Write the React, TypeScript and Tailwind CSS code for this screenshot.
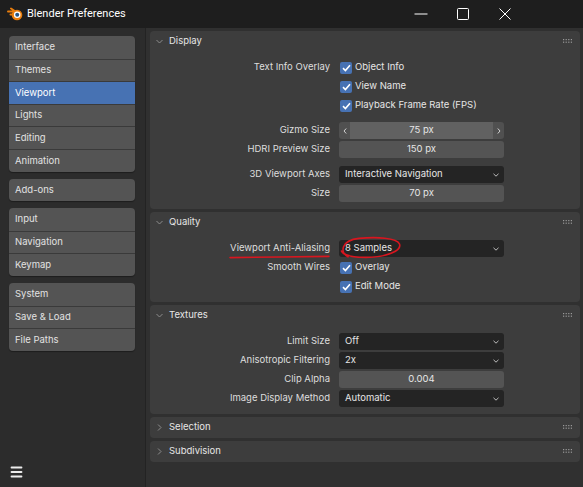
import React from "react";

const ui = "font-['Inter','DejaVu_Sans',sans-serif] text-[9.5px]";

function BlenderLogo() {
  return (
    <svg width="16" height="14" viewBox="0 0 16 14">
      <path d="M1 4.5 L7 4.5 M3.5 7.5 L7.5 7.5 M4 1.5 L8.5 4.5" stroke="#e87d0d" strokeWidth="2" strokeLinecap="round" />
      <circle cx="10" cy="8" r="5.3" fill="#e87d0d" />
      <circle cx="10.2" cy="7.8" r="3.3" fill="#ffffff" />
      <circle cx="10.2" cy="7.8" r="2" fill="#265787" />
    </svg>
  );
}

function TitleBar() {
  return (
    <div className="h-[28px] flex items-center bg-[#1e1e1e] shrink-0">
      <div className="ml-[7px] flex items-center">
        <BlenderLogo />
      </div>
      <span className="ml-[4px] text-white text-[11px] font-['Roboto',sans-serif]">Blender Preferences</span>
      <div className="ml-auto mr-[57px] flex h-full">
        <div className="w-[42px] flex items-center justify-center">
          <svg width="14" height="2" viewBox="0 0 14 2">
            <path d="M0.5 1 H13.5" stroke="#ffffff" strokeWidth="1" />
          </svg>
        </div>
        <div className="w-[42px] flex items-center justify-center">
          <svg width="12" height="12" viewBox="0 0 12 12">
            <rect x="0.5" y="0.5" width="11" height="11" rx="1" fill="none" stroke="#ffffff" strokeWidth="1" />
          </svg>
        </div>
        <div className="w-[42px] flex items-center justify-center">
          <svg width="12" height="12" viewBox="0 0 12 12">
            <path d="M0.5 0.5 L11.5 11.5 M11.5 0.5 L0.5 11.5" stroke="#ffffff" strokeWidth="1" />
          </svg>
        </div>
      </div>
    </div>
  );
}

type NavItem = { name: string; active?: boolean };

const groups: NavItem[][] = [
  [
    { name: "Interface" },
    { name: "Themes" },
    { name: "Viewport", active: true },
    { name: "Lights" },
    { name: "Editing" },
    { name: "Animation" },
  ],
  [{ name: "Add-ons" }],
  [{ name: "Input" }, { name: "Navigation" }, { name: "Keymap" }],
  [{ name: "System" }, { name: "Save & Load" }, { name: "File Paths" }],
];

function Sidebar() {
  return (
    <div className="w-[146px] shrink-0 bg-[#2c2c2c] border-r border-[#232323] flex flex-col pt-[8px] pl-[9px] pr-[10px] pb-[9px]">
      <div className="flex flex-col gap-[7px]">
        {groups.map((g, gi) => (
          <div key={gi} className="rounded-[4px] overflow-hidden bg-[#545454] shadow-[0_1px_1px_rgba(0,0,0,0.35)]">
            {g.map((item, i) => (
              <div
                key={item.name}
                className={
                  "h-[22.6px] flex items-center pl-[6px] " +
                  (i > 0 ? "border-t border-[#3a3a3a] " : "") +
                  (item.active ? "bg-[#4772b3] text-white" : "text-[#e2e2e2]")
                }
              >
                {item.name}
              </div>
            ))}
          </div>
        ))}
      </div>
      <div className="mt-auto ml-[1px]">
        <svg width="13" height="12" viewBox="0 0 13 12">
          <path d="M1.5 1.5 H11.5 M1.5 6 H11.5 M1.5 10.5 H11.5" stroke="#ececec" strokeWidth="1.8" strokeLinecap="round" />
        </svg>
      </div>
    </div>
  );
}

function Chevron({ open }: { open: boolean }) {
  return open ? (
    <svg width="7" height="7" viewBox="0 0 7 7">
      <path d="M0.5 2 L3.5 5 L6.5 2" fill="none" stroke="#8c8c8c" strokeWidth="1" />
    </svg>
  ) : (
    <svg width="7" height="7" viewBox="0 0 7 7">
      <path d="M2 0.5 L5 3.5 L2 6.5" fill="none" stroke="#8c8c8c" strokeWidth="1" />
    </svg>
  );
}

function Grip() {
  const dots = [];
  for (let r = 0; r < 2; r++) {
    for (let c = 0; c < 4; c++) {
      dots.push(<rect key={r + "-" + c} x={c * 2.6} y={r * 2.6} width="1.2" height="1.2" fill="#9a9a9a" />);
    }
  }
  return (
    <svg width="10" height="5" viewBox="0 0 10 5" className="ml-auto">
      {dots}
    </svg>
  );
}

function Panel({ title, open, children }: { title: string; open: boolean; children?: React.ReactNode }) {
  return (
    <div className="rounded-[4px] bg-[#3d3d3d]">
      <div className="h-[21px] flex items-center pl-[6px] pr-[7px]">
        <Chevron open={open} />
        <span className="ml-[6px] text-[#e6e6e6]">{title}</span>
        <Grip />
      </div>
      {open ? <div className="pt-[6px] pb-[6px] flex flex-col">{children}</div> : null}
    </div>
  );
}

function Row({ label, children, gapTop }: { label?: React.ReactNode; children: React.ReactNode; gapTop?: boolean }) {
  return (
    <div className={"grid grid-cols-[180px_165px] gap-x-[9px] h-[19px] items-center" + (gapTop ? " mt-[6px]" : "")}>
      <div className="text-right text-[#dedede]">{label}</div>
      <div className="h-[17px] flex items-center">{children}</div>
    </div>
  );
}

function Check({ label }: { label: string }) {
  return (
    <div className="flex items-center gap-[3px] pl-[1px]">
      <div className="w-[12px] h-[12px] rounded-[2px] bg-[#4772b3] flex items-center justify-center">
        <svg width="9" height="8" viewBox="0 0 9 8">
          <path d="M1 4.2 L3.4 6.5 L8 1.2" fill="none" stroke="#ffffff" strokeWidth="1.6" />
        </svg>
      </div>
      <span className="text-[#e6e6e6]">{label}</span>
    </div>
  );
}

function Num({ value }: { value: string }) {
  return (
    <div className="w-full h-full rounded-[3px] bg-[#545454] flex items-center justify-center text-[#e6e6e6]">
      {value}
    </div>
  );
}

function Slider({ value }: { value: string }) {
  return (
    <div className="w-full h-full rounded-[3px] overflow-hidden flex text-[#e6e6e6]">
      <div className="w-[11px] bg-[#505050] flex items-center justify-center">
        <svg width="4" height="6" viewBox="0 0 4 6">
          <path d="M3.2 0.5 L1 3 L3.2 5.5" fill="none" stroke="#d0d0d0" strokeWidth="1" />
        </svg>
      </div>
      <div className="flex-1 bg-[#616161] flex items-center justify-center">{value}</div>
      <div className="w-[11px] bg-[#505050] flex items-center justify-center">
        <svg width="4" height="6" viewBox="0 0 4 6">
          <path d="M0.8 0.5 L3 3 L0.8 5.5" fill="none" stroke="#d0d0d0" strokeWidth="1" />
        </svg>
      </div>
    </div>
  );
}

function Menu({ value, children }: { value: string; children?: React.ReactNode }) {
  return (
    <div className="relative w-full h-full rounded-[3px] bg-[#242424] flex items-center pl-[6px] pr-[5px] text-[#e6e6e6]">
      <span>{value}</span>
      <svg width="6" height="4" viewBox="0 0 6 4" className="ml-auto">
        <path d="M0.5 0.8 L3 3.2 L5.5 0.8" fill="none" stroke="#bdbdbd" strokeWidth="1" />
      </svg>
      {children}
    </div>
  );
}

function Underlined({ text }: { text: string }) {
  return (
    <span className="relative inline-block">
      {text}
      <svg
        className="absolute left-[-1px] right-0 bottom-[-3px] w-[calc(100%+1px)] h-[4px]"
        viewBox="0 0 100 4"
        preserveAspectRatio="none"
      >
        <path d="M1 2.6 C30 2.2, 70 1.6, 99 1.4" fill="none" stroke="#d8161f" strokeWidth="1.6" strokeLinecap="round" vectorEffect="non-scaling-stroke" />
      </svg>
    </span>
  );
}

function Circled() {
  return (
    <svg className="absolute left-[-1px] top-[-4px] pointer-events-none" width="66" height="24" viewBox="0 0 66 24">
      <path
        d="M10 20.8 C2 16.5, 2.5 4.5, 21 2.4 C38 0.8, 59 1.6, 61.5 8 C64 15, 48 21.4, 28 21.4 C15 21.4, 6 19.6, 3.5 15"
        fill="none"
        stroke="#d8161f"
        strokeWidth="1.6"
        strokeLinecap="round"
      />
    </svg>
  );
}

export default function App() {
  return (
    <div className={"w-[583px] h-[487px] flex flex-col overflow-hidden bg-[#303030] " + ui}>
      <TitleBar />
      <div className="flex flex-1 min-h-0">
        <Sidebar />
        <div className="flex-1 pl-[4px] pr-[3px] pt-[3px] flex flex-col gap-[3px] bg-[#303030]">
          <Panel title="Display" open>
            <Row label="Text Info Overlay">
              <Check label="Object Info" />
            </Row>
            <Row>
              <Check label="View Name" />
            </Row>
            <Row>
              <Check label="Playback Frame Rate (FPS)" />
            </Row>
            <Row label="Gizmo Size" gapTop>
              <Slider value="75 px" />
            </Row>
            <Row label="HDRI Preview Size">
              <Num value="150 px" />
            </Row>
            <Row label="3D Viewport Axes" gapTop>
              <Menu value="Interactive Navigation" />
            </Row>
            <Row label="Size">
              <Num value="70 px" />
            </Row>
          </Panel>
          <Panel title="Quality" open>
            <Row label={<Underlined text="Viewport Anti-Aliasing" />}>
              <Menu value="8 Samples">
                <Circled />
              </Menu>
            </Row>
            <Row label="Smooth Wires">
              <Check label="Overlay" />
            </Row>
            <Row>
              <Check label="Edit Mode" />
            </Row>
          </Panel>
          <Panel title="Textures" open>
            <Row label="Limit Size">
              <Menu value="Off" />
            </Row>
            <Row label="Anisotropic Filtering">
              <Menu value="2x" />
            </Row>
            <Row label="Clip Alpha">
              <Num value="0.004" />
            </Row>
            <Row label="Image Display Method">
              <Menu value="Automatic" />
            </Row>
          </Panel>
          <Panel title="Selection" open={false} />
          <Panel title="Subdivision" open={false} />
        </div>
      </div>
    </div>
  );
}
